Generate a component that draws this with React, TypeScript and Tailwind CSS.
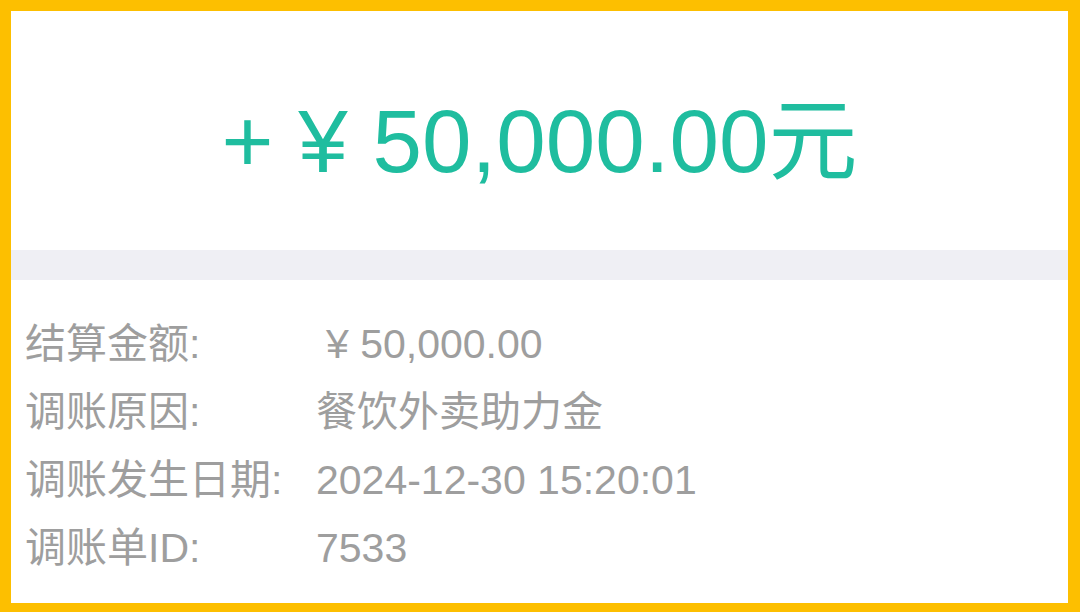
import React from 'react';

const rows = [
  { label: '结算金额:', value: '¥ 50,000.00', indent: true },
  { label: '调账原因:', value: '餐饮外卖助力金' },
  { label: '调账发生日期:', value: '2024-12-30 15:20:01' },
  { label: '调账单ID:', value: '7533' },
];

const App: React.FC = () => {
  return (
    <div
      className="w-[1080px] h-[612px] bg-[#fdbf00] pt-[11px] pl-[11px] pr-[12px] pb-[9px]"
      style={{ fontFamily: '"Liberation Sans", "Noto Sans CJK SC", sans-serif' }}
    >
      <div className="flex flex-col h-full bg-white">
        {/* 金额 */}
        <div className="flex justify-center h-[239px] pt-[86px]">
          <div className="text-[89px] leading-[89px] text-[#1fbd9f] whitespace-pre">+ ¥ 50,000.00元</div>
        </div>
        <div className="h-[30px] bg-[#efeff4]" />
        {/* 明细 */}
        <div className="flex flex-col pt-[31px] pl-[14px]">
          {rows.map((row) => (
            <div key={row.label} className="flex items-center h-[68px] text-[41px] text-[#9e9e9e]">
              <span className="w-[291px] shrink-0">{row.label}</span>
              <span className={row.indent ? 'ml-[10px] whitespace-pre' : 'whitespace-pre'}>{row.value}</span>
            </div>
          ))}
        </div>
      </div>
    </div>
  );
};

export default App;
